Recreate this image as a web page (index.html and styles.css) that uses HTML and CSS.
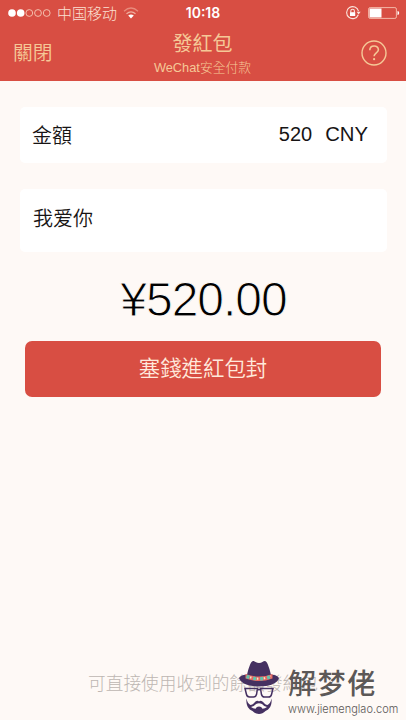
FILE: index.html
```
<!DOCTYPE html>
<html lang="zh-Hant">
<head>
<meta charset="utf-8">
<title>發紅包</title>
<link rel="stylesheet" href="styles.css">
</head>
<body>
<header class="top">
  <div class="status">
    <div class="carrier">
      <svg class="signal" width="44" height="10" viewBox="0 0 44 10"><g fill="#fff"><circle cx="4" cy="5" r="3.8"/><circle cx="12.7" cy="5" r="3.8"/></g><g fill="none" stroke="#f6cbb8" stroke-width=".9"><circle cx="21.3" cy="5" r="3.4"/><circle cx="30" cy="5" r="3.4"/><circle cx="38.7" cy="5" r="3.4"/></g></svg>
      <span class="operator">中国移动</span>
      <svg class="wifi" width="16" height="12" viewBox="0 0 16 12" fill="none" stroke-width="1.2"><path d="M1 4.2Q8-2.2 15 4.2" stroke="#e88b7c"/><path d="M3.5 6.8Q8 2.8 12.5 6.8" stroke="#f0b0a0"/><path d="M5.2 8.6Q8 6.2 10.8 8.6L8 11.4Z" fill="#fff"/></svg>
    </div>
    <time class="clock">10:18</time>
    <div class="power">
      <svg width="15" height="14" viewBox="0 0 15 14" fill="none" stroke="#fbe5dc" stroke-width="1.1"><path d="M12.3 8.7A6 6 0 1 1 12.5 5.2"/><path d="M10.6 5.7h4l-2 2.7z" fill="#fbe5dc" stroke="none"/><path d="M4.8 6.5V5a1.8 1.8 0 0 1 3.6 0v1.5"/><rect x="4" y="6.2" width="5.2" height="3.8" fill="#fff" stroke="none"/></svg>
      <svg width="32" height="12" viewBox="0 0 32 12"><rect x=".6" y=".6" width="27.8" height="10.8" rx="1.5" fill="none" stroke="#f3b8a8"/><rect x="1.5" y="1.5" width="12" height="9" fill="#fff"/><path d="M29.5 4q1.7 0 1.7 2t-1.7 2z" fill="#fff"/></svg>
    </div>
  </div>
  <nav class="nav">
    <a class="close">關閉</a>
    <div class="titles"><h1>發紅包</h1><p>WeChat安全付款</p></div>
    <svg class="help" width="28" height="28" viewBox="0 0 28 28" fill="none" stroke="#f5c897" stroke-width="1.4"><circle cx="14" cy="14" r="12"/><path d="M9.800 11.300c0-5.600 8.600-5.600 8.600-.5 0 3-4.300 3.200-4.300 6.400" stroke-width="1.6"/><circle cx="14.1" cy="20.2" r="1.1" fill="#f5c897" stroke="none"/></svg>
  </nav>
</header>
<main class="content">
  <section class="card amount"><span class="label">金額</span><span class="value">520</span><span class="currency">CNY</span></section>
  <section class="card message">我爱你</section>
  <div class="total">¥520.00</div>
  <button class="submit">塞錢進紅包封</button>
</main>
<footer class="note">可直接使用收到的餘額發紅包</footer>
<aside class="mark">
  <svg class="face" width="42" height="56" viewBox="0 0 42 56"><path d="M8 19C10 10 12.500 1 15 1c2 0 3 2 6 2s4-2 6-2c2.500 0 5 9 7 18z" fill="#453061"/><path d="M1 18c2-3 5-3.500 8-3.500h23c4 0 7 .5 9 3.500-1 5-10 8.500-20 8.500S2 23 1 18z" fill="#453061"/><path d="M7.500 14q13.500 5 27 0v4.500q-13.500 5-27 0z" fill="#e66763"/><path d="M8.500 16.300q12.500 5 25 0" fill="none" stroke="#64c3ad" stroke-width="3.4" stroke-dasharray="3 4"/><path d="M12 17.200q10 3.500 21-1" fill="none" stroke="#f3e9c8" stroke-width="2.200" stroke-dasharray="1.5 5.5"/><g fill="none" stroke="#453061" stroke-width="1.5"><path d="M7 28.500h12.500l-1 6q-.6 2.500-3 2.500h-4q-2.500-.2-3-2.500zM22.500 28.500H35l-1.500 6q-.5 2.500-3 2.500h-4q-2.400 0-3-2.500zM19 30q2-1 4 0"/></g><path d="M8.500 38.500q1 5 4 6.500c3.500-.3 4-4 7-4.200q1 0 1.500.8.500-.8 1.500-.8c3 .2 3.500 3.900 7 4.200q3-1.500 4-6.500c.7 6-1.500 10.500-6 12.500-2 2-4 3-6.500 3s-4.500-1-6.500-3c-4.500-2-6.700-6.500-6-12.500zM13 47q2 1.500 4.500 1.700 1-2.300 3.500-2.300t3.500 2.300Q27 48.500 29 47q-3-.5-5-3-1.500-.8-3-.8t-3 .8q-2 2.500-5 3z" fill="#453061" fill-rule="evenodd"/></svg>
  <div class="words"><strong>解梦佬</strong><span>www.jiemenglao.com</span></div>
</aside>
</body>
</html>
```

FILE: styles.css
```
* { box-sizing: border-box; }
body {
  margin: 0;
  width: 406px;
  height: 720px;
  display: flex;
  flex-direction: column;
  position: relative;
  overflow: hidden;
  background: #fef9f6;
  color: #171414;
  font-family: "Liberation Sans", "Noto Sans CJK TC", sans-serif;
}
h1, p { margin: 0; font-weight: 400; }
svg { display: block; flex: none; }
.top { height: 81px; background: #d84e43; }
.status {
  height: 26px;
  display: grid;
  grid-template-columns: 1fr auto 1fr;
  align-items: center;
  padding: 0 6px 0 8px;
}
.carrier { display: flex; align-items: center; }
.operator {
  margin-left: 5px;
  color: #fbe0d3;
  font: 300 15px/26px "Noto Sans CJK SC", sans-serif;
}
.wifi { margin-left: 6px; }
.clock { margin-left: -2px; color: #fff; font: 600 14px/26px Inter, sans-serif; }
.power { display: flex; justify-content: flex-end; align-items: center; gap: 7px; }
.nav {
  height: 55px;
  display: grid;
  grid-template-columns: 1fr auto 1fr;
  padding: 0 18px 0 13px;
  color: #f5c897;
}
.close { font-size: 19.800px; font-weight: 350; line-height: 54px; }
.titles { text-align: center; margin-right: -4px; }
.titles h1 { font-size: 20px; line-height: 36px; }
.titles p { font-size: 12.800px; font-weight: 300; line-height: 14px; margin-top: -1px; }
.help { justify-self: end; margin-top: 13px; }
.content { padding: 26px 19px 0 20px; }
.card { background: #fff; border-radius: 5px; display: flex; align-items: center; font-size: 20px; font-weight: 350; }
.amount { height: 56px; padding: 0 19px 2px 12px; }
.label { flex: 1; }
.currency { margin-left: 13px; font-size: 20.300px; }
.message { height: 63px; margin-top: 26px; padding: 0 13px 6px; font-family: "Noto Sans CJK SC", sans-serif; }
.total {
  margin-top: 19px;
  height: 57px;
  text-align: center;
  color: #000;
  font: 400 48px/57px "Liberation Sans", sans-serif;
  letter-spacing: -1px;
  -webkit-text-stroke: 1px #fef9f6;
}
.submit {
  display: block;
  width: 356px;
  height: 56px;
  margin: 13px 0 0 5px;
  padding: 0 0 5px;
  border: 0;
  border-radius: 7px;
  background: #d84e43;
  color: #ffe9dc;
  font: 350 21.400px "Noto Sans CJK TC", sans-serif;
}
.note { margin: auto auto 22px 88px; color: #bdb6b2; font-size: 17.700px; font-weight: 300; line-height: 28px; }
.mark { position: absolute; left: 238px; top: 660px; display: flex; }
.words { margin-left: 8px; color: #5c5857; }
.words strong { display: block; font: 500 28px/36px "Noto Sans CJK SC", sans-serif; letter-spacing: 1.800px; margin-top: 4px; }
.words span { display: block; font: 300 11px/12px Inter, sans-serif; margin-top: 3px; }
```
